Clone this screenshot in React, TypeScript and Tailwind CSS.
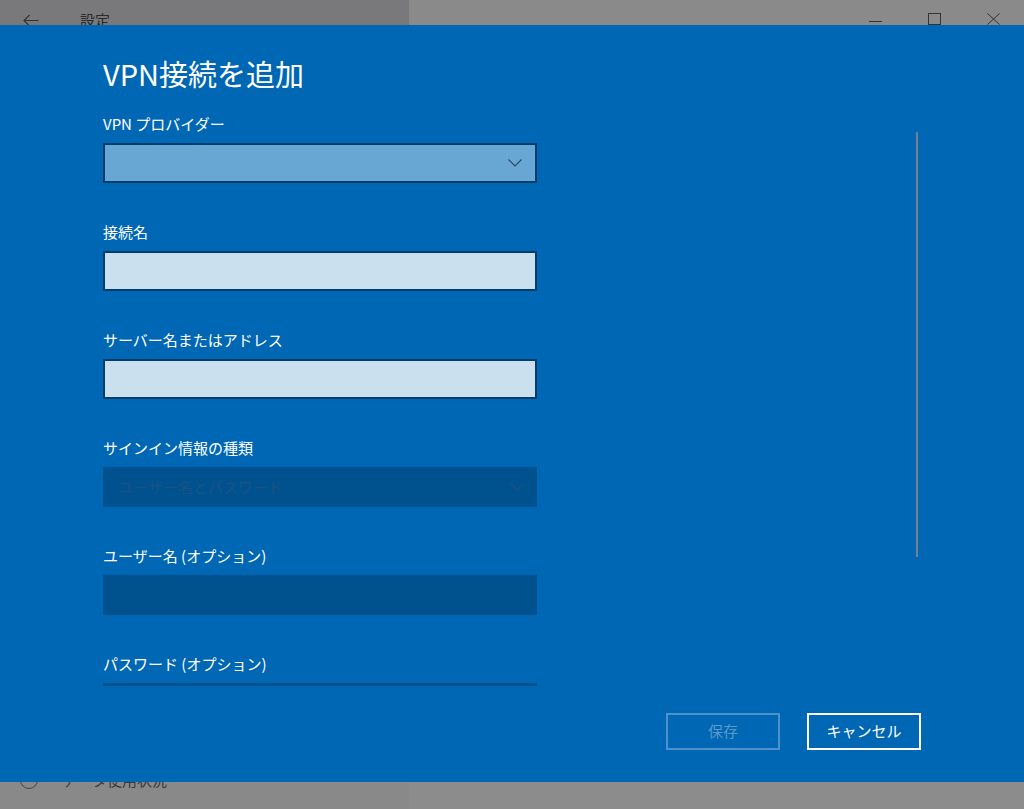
import React from 'react';

const Chevron = ({ color }: { color: string }) => (
  <svg width="14" height="8" viewBox="0 0 14 8" fill="none">
    <path d="M0.5 0.5 L7 7 L13.5 0.5" stroke={color} strokeWidth="1.2" />
  </svg>
);

const Field = ({ label, children }: { label: string; children: React.ReactNode }) => (
  <div className="flex flex-col mb-[39px]">
    <div className="text-[15px] leading-[20px] text-white mb-[9px]">{label}</div>
    {children}
  </div>
);

export default function App() {
  return (
    <div className="relative w-[1024px] h-[809px] overflow-hidden flex font-['Noto_Sans_CJK_JP','Noto_Sans',sans-serif]">
      {/* settings window behind the dialog */}
      <aside className="w-[409px] flex flex-col bg-[#898989]">
        <div className="h-[41px] flex items-center bg-[#79787a] text-[#2b2b2b]">
          <svg className="ml-[23px]" width="16" height="13" viewBox="0 0 16 13" fill="none">
            <path d="M15.5 6.5 H1 M6.5 1 L1 6.5 L6.5 12" stroke="#333" strokeWidth="1.1" />
          </svg>
          <span className="ml-[41px] text-[15px]">設定</span>
        </div>
        <div className="mt-auto mb-[19px] flex items-center h-[20px] text-[#3a3a3a]">
          <span className="ml-[20px] w-[18px] h-[18px] rounded-full border-[1.5px] border-[#444]" />
          <span className="ml-[24px] text-[15px]">データ使用状況</span>
        </div>
      </aside>
      <div className="flex-1 flex flex-col bg-[#8c8c8c]">
        <div className="h-[41px] bg-[#8a8a8a] flex justify-end items-start pt-[13px] pr-[24px] gap-[46px]">
          <svg width="13" height="12" viewBox="0 0 13 12" fill="none">
            <path d="M0 8.5 H13" stroke="#333" strokeWidth="1" />
          </svg>
          <svg width="13" height="12" viewBox="0 0 13 12" fill="none">
            <rect x="0.5" y="0.5" width="12" height="11" stroke="#333" strokeWidth="1" />
          </svg>
          <svg width="13" height="12" viewBox="0 0 13 12" fill="none">
            <path d="M0.5 0.5 L12.5 11.5 M12.5 0.5 L0.5 11.5" stroke="#333" strokeWidth="1" />
          </svg>
        </div>
      </div>

      {/* VPN dialog */}
      <div className="absolute left-0 right-0 top-[25px] h-[757px] bg-[#0067b4] flex flex-col">
        <h1 className="pl-[103px] pt-[30px] text-[29px] leading-[36px] font-normal text-white">VPN接続を追加</h1>

        <div className="relative h-[595px] overflow-hidden">
          <div className="pl-[103px] pt-[23px] w-[537px] box-content">
            <Field label="VPN プロバイダー">
              <div className="h-[40px] w-[434px] bg-[#68a6d3] border-2 border-[#003c6c] flex items-center justify-end pr-[13px]">
                <Chevron color="#2b4c69" />
              </div>
            </Field>
            <Field label="接続名">
              <div className="h-[40px] w-[434px] bg-[#cae0ee] border-2 border-[#003c6c]" />
            </Field>
            <Field label="サーバー名またはアドレス">
              <div className="h-[40px] w-[434px] bg-[#cae0ee] border-2 border-[#003c6c]" />
            </Field>
            <Field label="サインイン情報の種類">
              <div className="h-[40px] w-[434px] bg-[#00528f] flex items-center justify-between pl-[15px] pr-[13px]">
                <span className="text-[15px] text-[#1d5185]">ユーザー名とパスワード</span>
                <Chevron color="#1d5185" />
              </div>
            </Field>
            <Field label="ユーザー名 (オプション)">
              <div className="h-[40px] w-[434px] bg-[#00528f]" />
            </Field>
            <Field label="パスワード (オプション)">
              <div className="h-[40px] w-[434px] bg-[#00528f]" />
            </Field>
          </div>
          <div className="absolute left-[916px] top-[41px] w-[2px] h-[425px] bg-[#7b7e8c]" />
        </div>

        <div className="flex justify-end gap-[27px] pt-[27px] pr-[103px]">
          <button className="w-[114px] h-[37px] border-2 border-[#4f91cb] text-[15px] text-[#5b98cb]">保存</button>
          <button className="w-[114px] h-[37px] border-2 border-white text-[15px] text-white">キャンセル</button>
        </div>
      </div>
    </div>
  );
}
